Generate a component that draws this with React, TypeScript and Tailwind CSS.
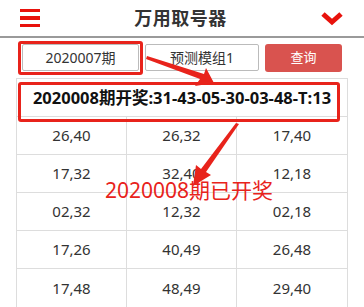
import React from 'react'

const rows = [
  ['26,40', '26,32', '17,40'],
  ['17,32', '32,40', '12,18'],
  ['02,32', '12,32', '02,18'],
  ['17,26', '40,49', '26,48'],
  ['17,48', '48,49', '29,40'],
]

const font = { fontFamily: '"Noto Sans", "Noto Sans CJK SC", sans-serif' }

export default function App() {
  return (
    <div className="relative w-[364px] h-[307px] overflow-hidden bg-white text-[#333]" style={font}>
      {/* Header */}
      <div className="flex items-center justify-between h-[38px] px-5 border-b-2 border-[#9a9a9a]">
        <div className="flex flex-col gap-[4px] w-5">
          <div className="h-[3.5px] bg-[#e8120c]" />
          <div className="h-[3.5px] bg-[#e8120c]" />
          <div className="h-[3.5px] bg-[#e8120c]" />
        </div>
        <h1 className="text-[18px] font-bold text-[#333] tracking-[0.5px]">万用取号器</h1>
        <svg width="22" height="16" viewBox="0 0 22 16" className="mr-[1px]">
          <path d="M2 4 L11 12 L20 4" fill="none" stroke="#e8120c" strokeWidth="5" strokeLinejoin="miter" />
        </svg>
      </div>

      {/* Query row */}
      <div className="flex gap-[6px] pl-[22px] pt-[6px]">
        <div className="w-[117px] h-[27px] flex items-center justify-center border border-[#bbb] rounded-[2px] text-[14px]">
          2020007期
        </div>
        <div className="w-[114px] h-[27px] flex items-center justify-center border border-[#bbb] rounded-[2px] text-[14px]">
          预测模组1
        </div>
        <button className="w-[77px] h-[28px] rounded-[3px] bg-[#d9534f] text-white text-[13px]">查询</button>
      </div>

      {/* Result table */}
      <div className="mx-[16px] mt-[6px] border border-[#ddd]">
        <div className="h-[38px] flex items-center justify-center border-b border-[#ddd] font-bold text-[16.5px] text-[#111] pt-[1px]">
          2020008期开奖:31-43-05-30-03-48-T:13
        </div>
        {rows.map((r, i) => (
          <div key={i} className="grid grid-cols-3 h-[38px] border-b border-[#ddd] last:border-b-0">
            {r.map((c, j) => (
              <div key={j} className="flex items-center justify-center text-[15px] border-r border-[#ddd] last:border-r-0">
                {c}
              </div>
            ))}
          </div>
        ))}
      </div>

      {/* Annotations */}
      <div className="absolute left-[18px] top-[41px] w-[125px] h-[34px] border-[3px] border-[#e8231b] rounded-[3px]" />
      <div className="absolute left-[18px] top-[82px] w-[322px] h-[40px] border-[3px] border-[#e8231b] rounded-[3px]" />
      <svg className="absolute left-0 top-0" width="364" height="307" viewBox="0 0 364 307">
        <polygon points="147,56 204,74 206,68 214,83 195,86 200,79 146,59" fill="#e8231b" />
        <polygon points="239,124 206,172 211,175 193,186 196,165 201,169 236,123" fill="#e8231b" />
      </svg>
      <div className="absolute left-[105px] top-[176px] text-[21px] leading-[28px] text-[#e8231b] whitespace-nowrap">
        2020008期已开奖
      </div>
    </div>
  )
}
